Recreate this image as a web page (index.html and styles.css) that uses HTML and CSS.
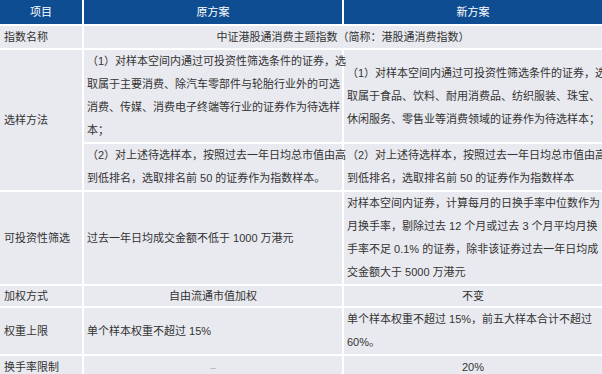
FILE: index.html
```html
<!DOCTYPE html>
<html lang="zh-CN">
<head>
<meta charset="utf-8">
<title>方案对比</title>
<link rel="stylesheet" href="styles.css">
</head>
<body>
<table class="cmp">
  <colgroup>
    <col class="c1"><col class="c2"><col class="c3">
  </colgroup>
  <thead>
    <tr class="head">
      <th>项目</th>
      <th>原方案</th>
      <th class="last">新方案</th>
    </tr>
  </thead>
  <tbody>
    <tr class="r-name">
      <td class="label">指数名称</td>
      <td class="center last" colspan="2">中证港股通消费主题指数（简称：港股通消费指数）</td>
    </tr>
    <tr class="r-sel1">
      <td class="label" rowspan="2">选样方法</td>
      <td class="text">（1）对样本空间内通过可投资性筛选条件的证券，选<br>取属于主要消费、除汽车零部件与轮胎行业外的可选<br>消费、传媒、消费电子终端等行业的证券作为待选样<br>本；</td>
      <td class="text last">（1）对样本空间内通过可投资性筛选条件的证券，选<br>取属于食品、饮料、耐用消费品、纺织服装、珠宝、<br>休闲服务、零售业等消费领域的证券作为待选样本；</td>
    </tr>
    <tr class="r-sel2">
      <td class="text">（2）对上述待选样本，按照过去一年日均总市值由高<br>到低排名，选取排名前 50 的证券作为指数样本。</td>
      <td class="text last">（2）对上述待选样本，按照过去一年日均总市值由高<br>到低排名，选取排名前 50 的证券作为指数样本</td>
    </tr>
    <tr class="r-inv">
      <td class="label">可投资性筛选</td>
      <td class="text">过去一年日均成交金额不低于 1000 万港元</td>
      <td class="text last">对样本空间内证券，计算每月的日换手率中位数作为<br>月换手率，剔除过去 12 个月或过去 3 个月平均月换<br>手率不足 0.1% 的证券，除非该证券过去一年日均成<br>交金额大于 5000 万港元</td>
    </tr>
    <tr class="r-weight">
      <td class="label">加权方式</td>
      <td class="center">自由流通市值加权</td>
      <td class="center last">不变</td>
    </tr>
    <tr class="r-cap">
      <td class="label">权重上限</td>
      <td class="text">单个样本权重不超过 15%</td>
      <td class="text last">单个样本权重不超过 15%，前五大样本合计不超过<br>60%。</td>
    </tr>
    <tr class="r-turn">
      <td class="label">换手率限制</td>
      <td class="center"><span class="dash">–</span></td>
      <td class="center last">20%</td>
    </tr>
  </tbody>
</table>
</body>
</html>
```
FILE: styles.css
```css
html, body {
  margin: 0;
  padding: 0;
  background: #ffffff;
  overflow: hidden;
}

.cmp {
  width: 602px;
  table-layout: fixed;
  border-collapse: separate;
  border-spacing: 0;
  font-family: "Liberation Sans", "Noto Sans CJK SC", sans-serif;
  font-size: 11px;
  color: #333333;
}

.c1 { width: 84px; }
.c2 { width: 260px; }
.c3 { width: 258px; }

.cmp th,
.cmp td {
  padding: 0 0 0 3px;
  border-right: 2px solid #ffffff;
  border-bottom: 2px solid #ffffff;
  background: #e9eaef;
  vertical-align: middle;
  white-space: nowrap;
  overflow: visible;
  line-height: 23px;
  font-weight: normal;
  text-align: left;
}

.cmp .last {
  border-right: none;
}

.head th {
  background: #0f4d92;
  color: #ffffff;
  text-align: center;
  line-height: 24px;
  padding: 0;
}

.cmp td.label {
  padding-left: 4px;
}

.cmp td.center {
  text-align: center;
  padding: 0;
}

.r-name td { line-height: 22px; }
.r-weight td { line-height: 20px; }

.dash {
  color: #b4b6bd;
}
```
